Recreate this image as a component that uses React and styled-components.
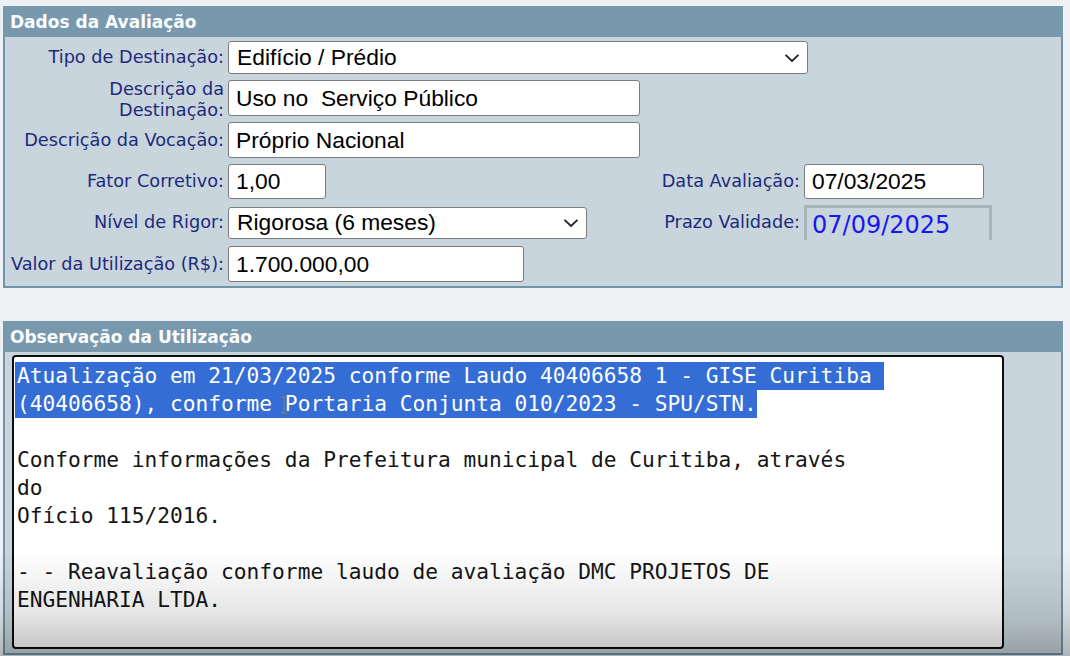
import React from 'react';
import styled, { createGlobalStyle } from 'styled-components';

const GlobalStyle = createGlobalStyle`
  html, body {
    margin: 0;
    padding: 0;
    background: #edf1f3;
    overflow: hidden;
  }
`;

const Page = styled.div`
  padding: 6px 7px 0 3px;
  font-family: "DejaVu Sans", Verdana, sans-serif;
`;

const Panel = styled.section`
  background: #c8d5dd;
  border: 2px solid #7294a9;
  border-top: none;
  margin-top: ${props => props.gap || 0}px;
`;

const PanelHeader = styled.div`
  height: 31px;
  margin: 0 -2px;
  padding-left: 7px;
  display: flex;
  align-items: center;
  background: #7899ad;
  color: #fbfcfd;
  font-weight: bold;
  font-size: 17px;
`;

const FormGrid = styled.div`
  display: grid;
  grid-template-columns: 219px 427px 141px 188px;
  column-gap: 4px;
  row-gap: 6px;
  padding: 4px 0 4px;
  align-items: center;
`;

const Label = styled.label`
  text-align: right;
  color: #1e2a7c;
  font-size: 17.7px;
  line-height: 21px;
  white-space: nowrap;
  margin: ${props => props.twoLines ? '-1px 0 -5px' : '0'};
`;

const Field = styled.div`
  grid-column: ${props => props.span ? '2 / span 3' : 'auto'};
  display: flex;
  align-items: center;
`;

const TextInput = styled.input`
  box-sizing: border-box;
  width: ${props => props.w}px;
  height: ${props => props.h || 36}px;
  padding: 0 7px;
  border: 1px solid #7d7d7d;
  border-radius: 3px;
  background: #fff;
  color: #000;
  font-family: "Liberation Sans", Arial, sans-serif;
  font-size: 22.8px;
  outline: none;
`;

const SelectBox = styled.div`
  box-sizing: border-box;
  width: ${props => props.w}px;
  height: ${props => props.h || 32}px;
  padding: 0 7px 0 8px;
  border: 1px solid #7d7d7d;
  border-radius: 3px;
  background: #fff;
  display: flex;
  align-items: center;
  justify-content: space-between;
  font-family: "Liberation Sans", Arial, sans-serif;
  font-size: 22.8px;
  color: #000;
`;

const ReadOnlyValue = styled.div`
  box-sizing: border-box;
  width: 188px;
  height: 35px;
  padding: 3px 0 0 5px;
  border: 3px solid #a9b4ba;
  border-bottom: none;
  color: #1717f0;
  font-size: 24px;
  line-height: 29px;
`;

const TextBody = styled.div`
  padding: 3px 0 4px 7px;
`;

const TextArea = styled.div`
  position: relative;
  box-sizing: border-box;
  width: 992px;
  height: 294px;
  padding: 5px 3px;
  border: 2px solid #0d0d0d;
  border-radius: 4px;
  background: #fff;
  font-family: "DejaVu Sans Mono", Consolas, monospace;
  font-size: 21.2px;
  color: #151515;
  overflow: hidden;
`;

const Line = styled.div`
  height: 28px;
  line-height: 28px;
  white-space: pre;
`;

const Mark = styled.span`
  display: inline-block;
  height: 28px;
  margin-left: -2px;
  padding-left: 2px;
  background: #346dd5;
  color: #fff;
`;

const Caret = styled.svg`
  position: absolute;
  left: 266px;
  top: 39px;
`;

const BottomShade = styled.div`
  position: fixed;
  left: 0;
  right: 0;
  bottom: 0;
  height: 104px;
  pointer-events: none;
  background: linear-gradient(to bottom, rgba(0, 0, 0, 0) 0%, rgba(0, 0, 0, 0.1) 60%, rgba(0, 0, 0, 0.25) 100%);
`;

function Chevron() {
  return (
    <svg width="16" height="10" viewBox="0 0 16 10">
      <path d="M1.5 1.8 L8 8 L14.5 1.8" fill="none" stroke="#222" strokeWidth="1.8" />
    </svg>
  );
}

const lines = [
  { text: 'Atualização em 21/03/2025 conforme Laudo 40406658 1 - GISE Curitiba ', marked: true },
  { text: '(40406658), conforme Portaria Conjunta 010/2023 - SPU/STN.', marked: true },
  { text: '' },
  { text: 'Conforme informações da Prefeitura municipal de Curitiba, através' },
  { text: 'do' },
  { text: 'Ofício 115/2016.' },
  { text: '' },
  { text: '- - Reavaliação conforme laudo de avaliação DMC PROJETOS DE' },
  { text: 'ENGENHARIA LTDA.' },
];

export default function App() {
  return (
    <Page>
      <GlobalStyle />
      <Panel>
        <PanelHeader>Dados da Avaliação</PanelHeader>
        <FormGrid>
          <Label>Tipo de Destinação:</Label>
          <Field span>
            <SelectBox w={580} h={33}>
              <span>Edifício / Prédio</span>
              <Chevron />
            </SelectBox>
          </Field>

          <Label twoLines>Descrição da<br />Destinação:</Label>
          <Field span>
            <TextInput w={412} defaultValue="Uso no  Serviço Público" />
          </Field>

          <Label>Descrição da Vocação:</Label>
          <Field span>
            <TextInput w={412} defaultValue="Próprio Nacional" />
          </Field>

          <Label>Fator Corretivo:</Label>
          <Field>
            <TextInput w={98} h={35} defaultValue="1,00" />
          </Field>
          <Label>Data Avaliação:</Label>
          <Field>
            <TextInput w={180} h={35} defaultValue="07/03/2025" />
          </Field>

          <Label>Nível de Rigor:</Label>
          <Field>
            <SelectBox w={359}>
              <span>Rigorosa (6 meses)</span>
              <Chevron />
            </SelectBox>
          </Field>
          <Label>Prazo Validade:</Label>
          <Field>
            <ReadOnlyValue>07/09/2025</ReadOnlyValue>
          </Field>

          <Label>Valor da Utilização (R$):</Label>
          <Field>
            <TextInput w={296} defaultValue="1.700.000,00" />
          </Field>
        </FormGrid>
      </Panel>

      <Panel gap={33}>
        <PanelHeader>Observação da Utilização</PanelHeader>
        <TextBody>
          <TextArea>
            {lines.map((line, index) => (
              <Line key={index}>
                {line.marked ? <Mark>{line.text}</Mark> : line.text}
              </Line>
            ))}
            <Caret width="8" height="18" viewBox="0 0 8 18">
              <path d="M1 1 H7 M4 1 V17 M1 17 H7" fill="none" stroke="#7a7a7a" strokeWidth="1.5" />
            </Caret>
          </TextArea>
        </TextBody>
      </Panel>
      <BottomShade />
    </Page>
  );
}
